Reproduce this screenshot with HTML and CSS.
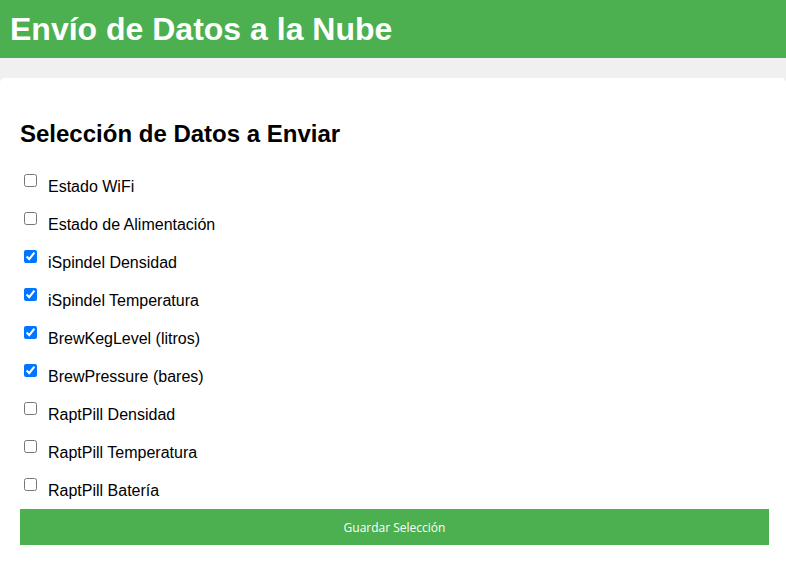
FILE: index.html
```html
<!DOCTYPE html>
<html lang="es">
<head>
    <meta charset="UTF-8">
    <meta name="viewport" content="width=device-width, initial-scale=1.0">
    <title>Envío de Datos a la Nube</title>
    <link rel="stylesheet" href="styles.css">
</head>
<body>
    <header class="top-bar">
        <h1>Envío de Datos a la Nube</h1>
    </header>

    <div class="container">
        <h2>Selección de Datos a Enviar</h2>

        <form class="data-form">
            <div class="option-list">
                <div class="option">
                    <input type="checkbox" id="wifi">
                    <label for="wifi">Estado WiFi</label>
                </div>
                <div class="option">
                    <input type="checkbox" id="power">
                    <label for="power">Estado de Alimentación</label>
                </div>
                <div class="option">
                    <input type="checkbox" id="ispindel-density" checked>
                    <label for="ispindel-density">iSpindel Densidad</label>
                </div>
                <div class="option">
                    <input type="checkbox" id="ispindel-temp" checked>
                    <label for="ispindel-temp">iSpindel Temperatura</label>
                </div>
                <div class="option">
                    <input type="checkbox" id="keg-level" checked>
                    <label for="keg-level">BrewKegLevel (litros)</label>
                </div>
                <div class="option">
                    <input type="checkbox" id="pressure" checked>
                    <label for="pressure">BrewPressure (bares)</label>
                </div>
                <div class="option">
                    <input type="checkbox" id="rapt-density">
                    <label for="rapt-density">RaptPill Densidad</label>
                </div>
                <div class="option">
                    <input type="checkbox" id="rapt-temp">
                    <label for="rapt-temp">RaptPill Temperatura</label>
                </div>
                <div class="option">
                    <input type="checkbox" id="rapt-battery">
                    <label for="rapt-battery">RaptPill Batería</label>
                </div>
            </div>

            <button type="button" class="save-button">Guardar Selección</button>
        </form>
    </div>
</body>
</html>
```

FILE: styles.css
```css
/* General page styling */
body {
    font-family: Arial, "Liberation Sans", sans-serif;
    background-color: #f0f0f0;
    margin: 0;
    padding: 0;
}

/* Green title bar */
.top-bar {
    background-color: #4CAF50;
    padding: 10px;
}

.top-bar h1 {
    margin: 0;
    color: #ffffff;
    font-size: 32px;
    line-height: 38px;
}

/* White card */
.container {
    background-color: #ffffff;
    margin-top: 20px;
    padding: 20px 17px 20px 20px;
    border-radius: 5px;
    min-height: 480px;
}

h2 {
    margin: 22px 0 24px;
    font-size: 24px;
    line-height: 28px;
    color: #000;
}

/* Checkbox rows */
.option-list {
    display: flex;
    flex-direction: column;
    gap: 14px;
}

.option {
    display: flex;
    align-items: flex-start;
}

.option input {
    width: 13px;
    height: 13px;
    margin: 2px 11px 0 4px;
}

.option label {
    padding-top: 6px;
    font-size: 16px;
    line-height: 18px;
    color: #000;
}

/* Save button */
.save-button {
    display: block;
    width: 100%;
    height: 36px;
    margin-top: 9px;
    background-color: #4CAF50;
    color: white;
    border: none;
    border-radius: 0;
    font-family: "Open Sans", sans-serif;
    font-size: 12px;
    cursor: pointer;
}

.save-button:hover {
    background-color: #45a049;
}
```
